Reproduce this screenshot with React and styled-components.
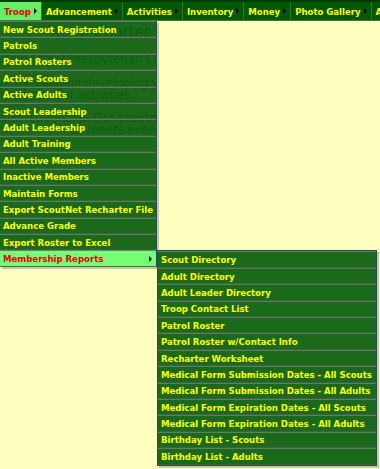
import React from "react";
import styled, { createGlobalStyle } from "styled-components";

const GlobalStyle = createGlobalStyle`
  html, body { margin: 0; padding: 0; }
  body {
    background: #ffffc0;
    font-family: "DejaVu Sans Condensed", "DejaVu Sans", Verdana, sans-serif;
    overflow: hidden;
  }
`;

const Page = styled.div`
  width: 380px;
  height: 469px;
  display: flex;
  flex-direction: column;
  background: #ffffc0;
`;

const MenuBar = styled.nav`
  display: flex;
  height: 21px;
  box-sizing: border-box;
  background: #005800;
  border-top: 2px solid #003c00;
  border-bottom: 1px solid #4e6e4e;
  white-space: nowrap;
  overflow: hidden;
  flex-shrink: 0;
`;

const BarItem = styled.div`
  display: flex;
  align-items: center;
  gap: 3px;
  padding: 0 4px 0 4px;
  border-right: 1px solid #3f6f3f;
  background: ${(p) => (p.$active ? "#66ee66" : "transparent")};
  color: ${(p) => (p.$active ? "#e00000" : "#ffff00")};
  font-weight: bold;
  font-size: 9.5px;
  flex-shrink: 0;
`;

const Arrow = styled.span`
  display: inline-block;
  width: 0;
  height: 0;
  border-top: 3px solid transparent;
  border-bottom: 3px solid transparent;
  border-left: 3px solid #000;
`;

const Body = styled.div`
  position: relative;
  flex: 1;
`;

const Ghost = styled.div`
  width: 156px;
  overflow: hidden;
  color: #1e4a00;
  font-family: "DejaVu Sans", Verdana, sans-serif;
  padding-top: 2px;
`;

const GhostTitle = styled.div`
  font-size: 15px;
  white-space: nowrap;
  padding-left: 48px;
  height: 24px;
`;

const GhostLine = styled.div`
  font-size: 11.5px;
  line-height: 12px;
  white-space: nowrap;
  margin-top: ${(p) => p.$gap || 0};
  padding-left: ${(p) => p.$indent || 0};
`;

const Dropdown = styled.ul`
  position: absolute;
  top: 0;
  left: 0;
  margin: 0;
  padding: 0;
  list-style: none;
  width: 157px;
  box-sizing: border-box;
  border-right: 1px solid #2e4c58;
  box-shadow: 2px 2px 0 rgba(90, 100, 90, 0.35);
`;

const Item = styled.li`
  position: relative;
  display: flex;
  align-items: center;
  height: 16.4px;
  box-sizing: border-box;
  padding: 0 4px 0 3px;
  border-top: 1px solid rgba(100, 128, 100, 0.95);
  border-bottom: 1px solid rgba(70, 96, 70, 0.95);
  background: ${(p) => (p.$active ? "#77ff77" : "rgba(10, 95, 15, 0.93)")};
  color: ${(p) => (p.$active ? "#e00000" : "#ffff00")};
  font-weight: bold;
  font-size: 9.5px;
  white-space: nowrap;
`;

const Label = styled.span`
  flex: 1;
`;

const Submenu = styled.ul`
  position: absolute;
  top: -1px;
  left: calc(100% + 1px);
  margin: 0;
  padding: 0;
  list-style: none;
  width: 220px;
  box-sizing: border-box;
  border: 1px solid #2e4c58;
  box-shadow: 2px 2px 0 rgba(90, 100, 90, 0.35);
`;

const SubItem = styled(Item)`
  padding-left: 3px;
`;

const barItems = [
  "Troop",
  "Advancement",
  "Activities",
  "Inventory",
  "Money",
  "Photo Gallery",
  "Admin",
];

const menuItems = [
  "New Scout Registration",
  "Patrols",
  "Patrol Rosters",
  "Active Scouts",
  "Active Adults",
  "Scout Leadership",
  "Adult Leadership",
  "Adult Training",
  "All Active Members",
  "Inactive Members",
  "Maintain Forms",
  "Export ScoutNet Recharter File",
  "Advance Grade",
  "Export Roster to Excel",
];

const subItems = [
  "Scout Directory",
  "Adult Directory",
  "Adult Leader Directory",
  "Troop Contact List",
  "Patrol Roster",
  "Patrol Roster w/Contact Info",
  "Recharter Worksheet",
  "Medical Form Submission Dates - All Scouts",
  "Medical Form Submission Dates - All Adults",
  "Medical Form Expiration Dates - All Scouts",
  "Medical Form Expiration Dates - All Adults",
  "Birthday List - Scouts",
  "Birthday List - Adults",
];

export default function App() {
  return (
    <Page>
      <GlobalStyle />
      <MenuBar>
        {barItems.map((t, i) => (
          <BarItem key={t} $active={i === 0}>
            {t}
            <Arrow />
          </BarItem>
        ))}
      </MenuBar>
      <Body>
        <Ghost aria-hidden="true">
          <GhostTitle>Troop Charter</GhostTitle>
          <GhostLine $gap="6px">Main Street Presbyterian Church of</GhostLine>
          <GhostLine $gap="12px">p, focusing on developing youth</GhostLine>
          <GhostLine>m of outdoor activities.</GhostLine>
          <GhostLine $gap="11px">dult leadership. Our scoutmaster</GhostLine>
          <GhostLine $indent="70px">ee meets every</GhostLine>
          <GhostLine>'s direction.</GhostLine>
        </Ghost>
        <Dropdown>
          {menuItems.map((t) => (
            <Item key={t}>
              <Label>{t}</Label>
            </Item>
          ))}
          <Item $active>
            <Label>Membership Reports</Label>
            <Arrow />
            <Submenu>
              {subItems.map((t) => (
                <SubItem key={t}>
                  <Label>{t}</Label>
                </SubItem>
              ))}
            </Submenu>
          </Item>
        </Dropdown>
      </Body>
    </Page>
  );
}
